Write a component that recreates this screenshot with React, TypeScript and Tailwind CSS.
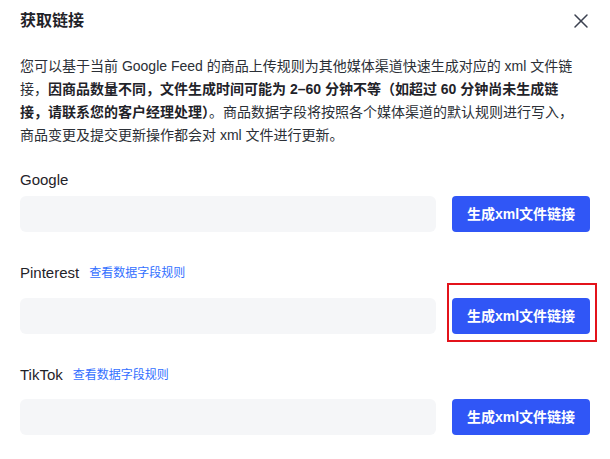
import { X } from 'lucide-react';

const CHANNELS = [
  { name: 'Google', rules: false, labelGap: 'mb-[5px]', boxed: false },
  { name: 'Pinterest', rules: true, labelGap: 'mb-[14px]', boxed: true },
  { name: 'TikTok', rules: true, labelGap: 'mb-[13px]', boxed: false },
];

export default function App() {
  return (
    <div
      className="w-[610px] h-[459px] bg-white px-5 pt-[9px] text-[#1f2329] overflow-hidden"
      style={{ fontFamily: '"Liberation Sans", "Noto Sans CJK SC", sans-serif' }}
    >
      <div className="flex items-center justify-between h-6">
        <h1 className="text-base font-bold leading-6">获取链接</h1>
        <X size={24} strokeWidth={1.5} className="text-[#3b4150] -mr-[3px]" />
      </div>

      <p className="mt-[22px] text-sm leading-[23px] text-[#2b2f36] whitespace-nowrap">
        您可以基于当前 Google Feed 的商品上传规则为其他媒体渠道快速生成对应的 xml 文件链
        <br />
        接，<b className="font-bold text-[#1f2329]">因商品数量不同，文件生成时间可能为 2–60 分钟不等（如超过 60 分钟尚未生成链</b>
        <br />
        <b className="font-bold text-[#1f2329]">接，请联系您的客户经理处理）</b>。商品数据字段将按照各个媒体渠道的默认规则进行写入，
        <br />
        商品变更及提交更新操作都会对 xml 文件进行更新。
      </p>

      <div className="mt-[22px] flex flex-col gap-[30px]">
        {CHANNELS.map(c => (
          <div key={c.name}>
            <div className={`flex items-center gap-[10px] h-[22px] ${c.labelGap}`}>
              <span className="text-[15px] text-[#1f2329]">{c.name}</span>
              {c.rules && <a className="text-xs text-[#3370ff] cursor-pointer">查看数据字段规则</a>}
            </div>
            <div className="flex items-center gap-4">
              <div className="flex-1 h-9 rounded-md bg-[#f5f6f8]" />
              <div className="relative">
                <button className="w-[138px] h-9 rounded bg-[#3056f6] text-white text-sm font-bold">
                  生成xml文件链接
                </button>
                {c.boxed && (
                  <div className="absolute -left-[5px] -right-[7px] -top-[15px] -bottom-[8px] border-2 border-[#e3131b] pointer-events-none" />
                )}
              </div>
            </div>
          </div>
        ))}
      </div>
    </div>
  );
}
